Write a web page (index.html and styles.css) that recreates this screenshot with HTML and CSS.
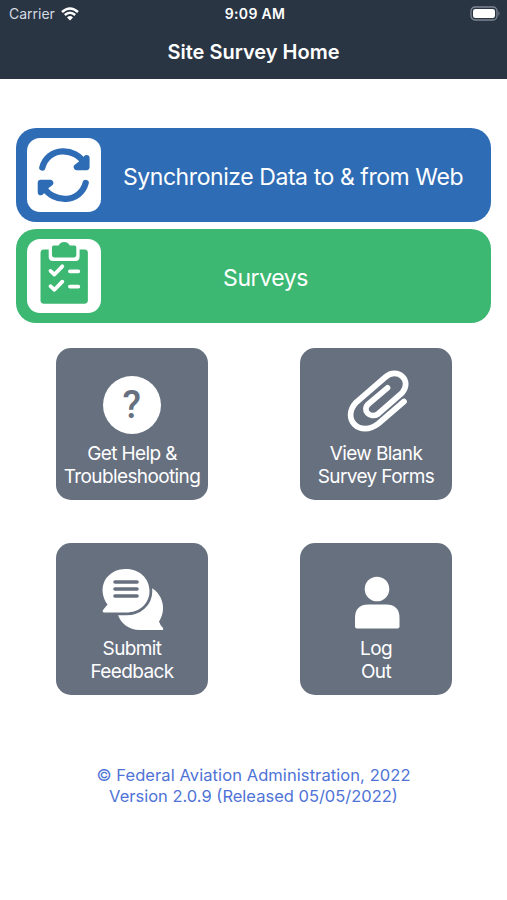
FILE: index.html
```
<!DOCTYPE html>
<html lang="en">

<head>
    <meta charset="UTF-8" />
    <meta name="viewport" content="width=device-width, initial-scale=1.0" />
    <title>Site Survey Home</title>
    <link rel="stylesheet" href="styles.css">
</head>

<body>
    <header>
        <div class="status-bar">
            <div class="carrier">
                <span>Carrier</span>
                <svg class="wifi" width="18" height="14" viewBox="0 0 18 14" fill="none" stroke="#fff" stroke-width="2.5">
                    <path d="M1 5 Q9 -2 17 5" />
                    <path d="M3.8 8 Q9 3.6 14.2 8" />
                    <path d="M6 10.4 Q9 7.6 12 10.4 L9 13.5 Z" fill="#fff" stroke="none" />
                </svg>
            </div>
            <span class="time">9:09 AM</span>
            <svg class="battery" width="31" height="15" viewBox="0 0 31 15">
                <rect x="1" y="1" width="26" height="13" rx="4" fill="none" stroke="#7d8590" stroke-width="1.3" />
                <rect x="3" y="3" width="22" height="9" rx="2.3" fill="#fff" />
                <path d="M28.5 5 Q30.5 7.5 28.5 10 Z" fill="#7d8590" />
            </svg>
        </div>
        <h1>Site Survey Home</h1>
    </header>
    <main>
        <button class="wide-btn sync">
            <svg class="badge" width="74" height="74" viewBox="0 0 75 75" fill="none" stroke="#2e6cb5" stroke-width="6.3" stroke-linecap="round" stroke-linejoin="round">
                <path d="M15.5 30 C21 9 49 8 59 27" />
                <path d="M50.500 29.500 H60.300 V20.500 L54 27 Z" />
                <path d="M59.500 45.500 C54 66 27 67 16 49" />
                <path d="M23.500 45.500 H14 V55 L20 48 Z" />
            </svg>
            <span class="wide-label">Synchronize Data to &amp; from Web</span>
        </button>
        <button class="wide-btn surveys">
            <svg class="badge" width="74" height="74" viewBox="0 0 75 75">
                <rect x="13.7" y="10.7" width="48" height="55" rx="3.5" fill="#3cb872" />
                <path d="M22 9 H53.3 V18 Q53.3 22.3 49 22.3 H26.3 Q22 22.3 22 18 Z" fill="#fff" />
                <path d="M27 6.5 H32 Q34 3 37.7 3 Q41.4 3 43.4 6.5 H48.3 Q50 6.5 50 8.5 V16 Q50 18.7 47.3 18.7 H28 Q25.3 18.7 25.3 16 V8.5 Q25.3 6.5 27 6.5 Z" fill="#3cb872" />
                <g fill="none" stroke="#fff" stroke-width="3.8" stroke-linecap="round" stroke-linejoin="round">
                    <path d="M23.8 32.3 L27.8 36 L35.8 27.7 M43.5 32.7 H52" />
                    <path d="M23.8 47.8 L27.8 51.5 L35.8 43.2 M43.5 48.2 H52" />
                </g>
            </svg>
            <span class="wide-label">Surveys</span>
        </button>
        <div class="tiles">
            <button class="tile">
                <svg width="152" height="94" viewBox="0 0 152 94">
                    <circle cx="76" cy="57" r="29" fill="#fff" />
                    <text class="question" x="75.500" y="70" text-anchor="middle">?</text>
                </svg>
                <span>Get Help &amp;<br>Troubleshooting</span>
            </button>
            <button class="tile">
                <svg width="152" height="94" viewBox="0 0 152 94" fill="none" stroke="#fff" stroke-width="5.700" stroke-linecap="round">
                    <path d="M104 53.5 L78.5 75.5 C60 90 41 71 56 54.5 L85.5 29 C97 19 113 32 102 45 L78 66 C70 71 61 62 69 55.5 L87.5 39.8" />
                </svg>
                <span>View Blank<br>Survey Forms</span>
            </button>
            <button class="tile">
                <svg width="152" height="94" viewBox="0 0 152 94">
                    <path d="M84 42 C104 42 113 64 103 78.5 Q104 82 107 85 Q108 87 105.500 87 H84 C72 87 65 80 62 72 Z" fill="#fff" />
                    <path d="M70 26 C84 26 93.500 36 93.500 48 C93.500 61 83 69.500 70 69.500 H48 Q46 69 47 67 L51.500 61.500 C40 45 50 26 70 26 Z" fill="#fff" stroke="#67707f" stroke-width="5.6" paint-order="stroke" />
                    <path d="M59 39 H81 M59 46 H81 M59 53 H81" stroke="#67707f" stroke-width="3.6" stroke-linecap="round" />
                </svg>
                <span>Submit<br>Feedback</span>
            </button>
            <button class="tile">
                <svg width="152" height="94" viewBox="0 0 152 94" fill="#fff">
                    <circle cx="77" cy="46" r="12.3" />
                    <path d="M55 83.500 V75 Q55 61.500 68.500 61.500 H86 Q99.500 61.500 99.500 75 V83.500 Q99.500 85.500 97.500 85.500 H57 Q55 85.500 55 83.500 Z" />
                </svg>
                <span>Log<br>Out</span>
            </button>
        </div>
    </main>
    <footer>
        <p class="copyright">© Federal Aviation Administration, 2022</p>
        <p class="version">Version 2.0.9 (Released 05/05/2022)</p>
    </footer>
</body>

</html>
```
FILE: styles.css
```
* {
    margin: 0;
    padding: 0;
    box-sizing: border-box;
    font-family: 'Inter', sans-serif;
}

body {
    background: #fff;
}

header {
    height: 79px;
    background: #2a3544;
    color: white;
}

.status-bar {
    display: grid;
    grid-template-columns: 1fr auto 1fr;
    align-items: center;
    height: 27px;
    padding: 0 6px 0 9px;
    font-size: 14px;
}

.carrier {
    display: flex;
    align-items: center;
    gap: 6px;
    color: #d5dbe2;
}

.time {
    font-weight: 600;
    font-size: 14px;
    letter-spacing: 0.3px;
}

.battery {
    justify-self: end;
}

header h1 {
    font-size: 20px;
    font-weight: 600;
    line-height: 24px;
    margin-top: 13px;
    text-align: center;
}

button {
    border: none;
    color: white;
    cursor: pointer;
}

main {
    padding: 49px 16px 0;
}

.wide-btn {
    display: flex;
    align-items: center;
    width: 475px;
    height: 94px;
    padding-left: 11px;
    border-radius: 20px;
    margin-bottom: 7px;
    font-size: 23px;
    letter-spacing: -0.43px;
}

.sync {
    background: #2e6cb5;
    padding-right: 6px;
}

.surveys {
    background: #3cb872;
    padding-right: 61px;
}

.badge {
    flex: none;
    background: #fff;
    border-radius: 13px;
}

.wide-label {
    flex: 1;
    padding-top: 3px;
    white-space: nowrap;
    text-align: center;
}

.tiles {
    display: grid;
    grid-template-columns: 152px 152px;
    gap: 43px 92px;
    padding: 17.5px 0 0 40px;
}

.tile {
    display: flex;
    flex-direction: column;
    align-items: center;
    height: 152px;
    border-radius: 15px;
    background: #67707f;
    font-size: 19px;
    line-height: 23px;
    letter-spacing: -0.62px;
    white-space: nowrap;
}

.tile svg {
    flex: none;
}

.question {
    font-family: 'Roboto', sans-serif;
    font-size: 38px;
    font-weight: 500;
    fill: #67707f;
}

footer {
    margin-top: 70.5px;
    text-align: center;
    font-size: 16.5px;
    line-height: 21px;
    color: #4f73d6;
}

.copyright {
    letter-spacing: 0.08px;
}
```
